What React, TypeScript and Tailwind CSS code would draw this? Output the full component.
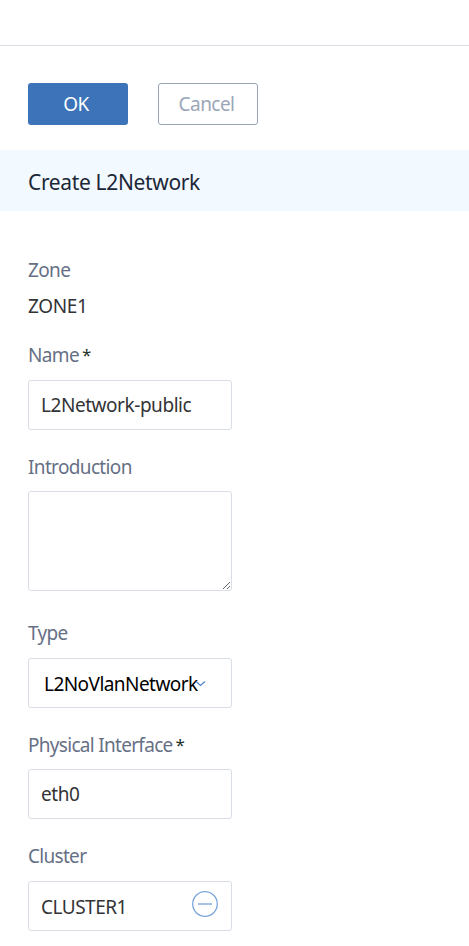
import type { ReactNode } from "react";

function Label({ children, required = false, tracking = "tracking-[-0.65px]" }: { children: ReactNode; required?: boolean; tracking?: string }) {
  return (
    <div className="flex h-6 items-center whitespace-nowrap text-[19px] leading-6 text-[#667085]">
      <span className={tracking}>{children}</span>
      {required && <span className="ml-[3px] text-[17px] text-[#1d3328]">*</span>}
    </div>
  );
}

function Field({ children, tracking = "tracking-[-0.45px]" }: { children: ReactNode; tracking?: string }) {
  return (
    <div className="flex h-[50px] w-[204px] items-center whitespace-nowrap rounded-[3px] border border-[#d9dde5] bg-white pl-[12px] text-[19px] text-[#333336]">
      <div className={`flex items-center ${tracking}`}>{children}</div>
    </div>
  );
}

export default function App() {
  return (
    <div className="h-[946px] w-full overflow-hidden bg-white font-['Noto_Sans',sans-serif] text-[19px]">
      <header className="h-[46px] border-b border-[#dadde4]" />
      <div className="flex gap-[30px] pl-7 pt-[37px]">
        <button className="h-[42px] w-[100px] rounded-[3px] bg-[#3d73b9] pr-1 text-[19px] tracking-[-0.6px] text-white">OK</button>
        <button className="h-[42px] w-[100px] rounded-[3px] border border-[#98a5b8] pr-[3px] text-[19px] tracking-[-0.55px] text-[#9ba6b8]">Cancel</button>
      </div>
      <h1 className="mt-[25px] flex h-[61px] items-center bg-[#f2f9ff] pl-7 pt-1 text-[21px] tracking-[-0.35px] text-[#1c2738]">Create L2Network</h1>
      <form className="flex flex-col pl-7 pt-[47px]">
        <Label>Zone</Label>
        <div className="mt-3 h-6 leading-6 tracking-[-0.4px] text-[#333336]">ZONE1</div>
        <div className="mt-[25px]"><Label required>Name</Label></div>
        <div className="mt-[13px]"><Field>L2Network-public</Field></div>
        <div className="mt-[25px]"><Label>Introduction</Label></div>
        <textarea className="mt-3 block h-[100px] w-[204px] resize rounded-[3px] border border-[#d9dde5]" />
        <div className="mt-[30px]"><Label>Type</Label></div>
        <div className="mt-[13px]">
          <Field tracking="tracking-[-0.55px]">
            <span className="ml-[3px] w-[151px] pt-[3px] text-black">L2NoVlanNetwork</span>
            <svg className="mt-px shrink-0" width="11" height="7" viewBox="0 0 11 7" fill="none" stroke="#4f84c8" strokeWidth="1.3">
              <path d="M1 1.5 5.5 5.5 10 1.5" />
            </svg>
          </Field>
        </div>
        <div className="mt-[25px]"><Label required tracking="tracking-[-0.7px]">Physical Interface</Label></div>
        <div className="mt-3"><Field>eth0</Field></div>
        <div className="mt-[25px]"><Label tracking="tracking-[-0.7px]">Cluster</Label></div>
        <div className="mt-[13px]">
          <Field tracking="tracking-[-0.5px]">
            <span className="w-[151px] pt-[3px]">CLUSTER1</span>
            <svg className="mb-[4px] shrink-0" width="26" height="26" viewBox="0 0 26 26" fill="none">
              <circle cx="13" cy="13" r="12.3" stroke="#7ba6da" strokeWidth="1.3" />
              <path d="M6 13H20" stroke="#a6c3e6" strokeWidth="2" />
            </svg>
          </Field>
        </div>
      </form>
    </div>
  );
}
